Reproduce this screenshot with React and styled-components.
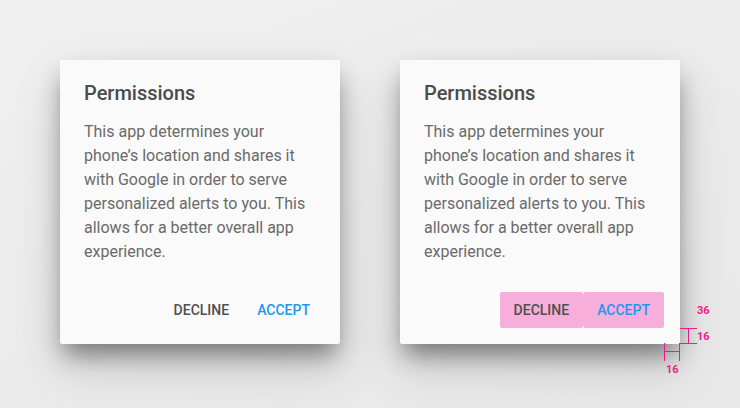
import React from "react";
import styled, { createGlobalStyle } from "styled-components";

const Global = createGlobalStyle`
  html, body { margin: 0; padding: 0; }
  body {
    width: 740px;
    height: 408px;
    overflow: hidden;
    background: linear-gradient(160deg, #f0f0f0 0%, #ebebeb 55%, #e8e8e8 100%);
    font-family: Roboto, "Noto Sans", "Liberation Sans", sans-serif;
  }
`;

const Stage = styled.div`
  display: flex;
  gap: 60px;
  padding: 60px 0 0 60px;
`;

const Card = styled.div`
  position: relative;
  width: 280px;
  height: 284px;
  box-sizing: border-box;
  background: #fafafa;
  border-radius: 2px;
  box-shadow: 0 14px 22px -4px rgba(0, 0, 0, 0.42),
    0 22px 48px 2px rgba(0, 0, 0, 0.14);
  display: flex;
  flex-direction: column;
  padding-top: 21px;
`;

const Title = styled.h2`
  margin: 0 24px;
  font-size: 20px;
  line-height: 24px;
  font-weight: 500;
  color: #4b4b4b;
`;

const Body = styled.p`
  margin: 15px 24px 0;
  font-size: 16px;
  line-height: 24px;
  font-weight: 400;
  color: #6a6a6a;
`;

const Actions = styled.div`
  margin-top: auto;
  display: flex;
  justify-content: flex-end;
  padding: 0 16px 16px;
`;

const pink = "#f7aedb";
const notch = "#fde6f2";

const Button = styled.button`
  height: 36px;
  padding: 0 14px;
  border: 0;
  border-radius: 2px;
  background: ${(p) =>
    !p.$highlight
      ? "transparent"
      : p.$primary
      ? `linear-gradient(${notch}, ${notch}) left top / 1px 2px no-repeat,
         linear-gradient(${notch}, ${notch}) left bottom / 1px 2px no-repeat,
         ${pink}`
      : pink};
  font-family: Roboto, "Noto Sans", "Liberation Sans", sans-serif;
  font-size: 14px;
  font-weight: 500;
  text-transform: uppercase;
  color: ${(p) => (p.$primary ? "#2196f3" : "#505050")};
  cursor: pointer;
`;

const Overlay = styled.svg`
  position: absolute;
  left: 264px;
  top: 240px;
  width: 52px;
  height: 80px;
  overflow: visible;
  font-family: Roboto, "Liberation Sans", sans-serif;
  font-size: 11px;
  font-weight: 700;
`;

const MARK = "#ec1c8c";

function Measure() {
  return (
    <Overlay viewBox="0 0 52 80">
      <g stroke={MARK} strokeWidth="1" fill="none">
        <path d="M16 28.5H33M16 43.5H33M24.5 28V44" />
        <path d="M0.5 43V61M15.5 43V61M0 51.5H16" />
      </g>
      <g fill={MARK}>
        <text x="33" y="14">36</text>
        <text x="33" y="40">16</text>
        <text x="2" y="73">16</text>
      </g>
    </Overlay>
  );
}

const text =
  "This app determines your phone’s location and shares it with Google in order to serve personalized alerts to you. This allows for a better overall app experience.";

function Dialog({ annotated }) {
  return (
    <Card>
      <Title>Permissions</Title>
      <Body>{text}</Body>
      <Actions>
        <Button $highlight={annotated}>Decline</Button>
        <Button $highlight={annotated} $primary>
          Accept
        </Button>
      </Actions>
      {annotated && <Measure />}
    </Card>
  );
}

export default function App() {
  return (
    <>
      <Global />
      <Stage>
        <Dialog />
        <Dialog annotated />
      </Stage>
    </>
  );
}
